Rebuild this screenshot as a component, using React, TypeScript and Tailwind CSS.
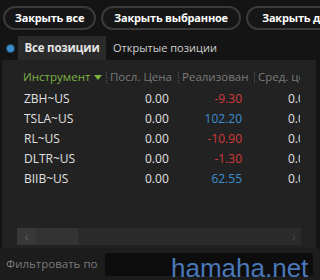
import React from 'react'

const rows = [
  { sym: 'ZBH~US', last: '0.00', real: '-9.30', avg: '0.00' },
  { sym: 'TSLA~US', last: '0.00', real: '102.20', avg: '0.00' },
  { sym: 'RL~US', last: '0.00', real: '-10.90', avg: '0.00' },
  { sym: 'DLTR~US', last: '0.00', real: '-1.30', avg: '0.00' },
  { sym: 'BIIB~US', last: '0.00', real: '62.55', avg: '0.00' },
]

function Sep() {
  return (
    <span className="flex w-[5px] shrink-0 justify-center">
      <span className="block h-[11px] border-l border-dotted border-[#555]" />
    </span>
  )
}

export default function App() {
  return (
    <div
      className="relative flex h-[280px] w-[320px] flex-col overflow-hidden bg-[#141414] text-[12px]"
      style={{ fontFamily: '"Open Sans", "Noto Sans", sans-serif' }}
    >
      {/* top buttons */}
      <div className="flex h-[36px] shrink-0 gap-[5px] whitespace-nowrap pl-[3px] pt-[6px]">
        <button className="h-[24px] w-[93px] shrink-0 rounded-full border-2 border-[#3a3a3a] bg-[#161616] text-[11px] font-bold tracking-[-0.2px] text-white">
          Закрыть все
        </button>
        <button className="h-[24px] w-[140px] shrink-0 rounded-full border-2 border-[#3a3a3a] bg-[#161616] text-[11px] font-bold tracking-[-0.2px] text-white">
          Закрыть выбранное
        </button>
        <button className="h-[24px] shrink-0 rounded-full border-2 border-[#3a3a3a] bg-[#161616] px-[14px] text-[11px] font-bold tracking-[-0.2px] text-white">
          Закрыть для
        </button>
      </div>

      {/* tabs */}
      <div className="flex h-[24px] shrink-0 items-stretch">
        <div className="flex w-[18px] items-center justify-center">
          <span className="ml-[2px] block h-[7px] w-[7px] rounded-full bg-[#3b8fd0] ring-1 ring-[#1d4a6b]" />
        </div>
        <div className="flex w-[88px] items-center justify-center bg-[#2a2a2a] text-[11.5px] font-bold tracking-[-0.2px] text-[#e6e6e6]">
          Все позиции
        </div>
        <div className="flex items-center pl-[7px] text-[11px] text-[#d0d0d0]">Открытые позиции</div>
      </div>

      {/* panel */}
      <div className="ml-[2px] mr-[4px] flex h-[188px] shrink-0 flex-col bg-[#222222]">
        <div className="mt-[9px] flex h-[16px] items-center whitespace-nowrap pl-[21px] text-[11.5px] text-[#7a7a7a]">
          <span className="flex w-[81px] shrink-0 items-center text-[#7cb342]">
            Инструмент
            <svg width="8" height="5" viewBox="0 0 8 5" className="ml-[4px]">
              <path d="M0 0h8L4 5z" fill="#7cb342" />
            </svg>
          </span>
          <Sep />
          <span className="w-[67px] shrink-0 pl-[1px]">Посл. Цена</span>
          <Sep />
          <span className="w-[71px] shrink-0 pl-[1px]">Реализован</span>
          <Sep />
          <span className="w-[43px] shrink-0 overflow-hidden pl-[1px]">Сред. цена</span>
        </div>
        <div className="mt-[4px] flex flex-col">
          {rows.map((r) => (
            <div key={r.sym} className="flex h-[20px] items-center whitespace-nowrap text-[12px] text-[#e0e0e0]">
              <span className="w-[143px] shrink-0 pl-[22px]">{r.sym}</span>
              <span className="w-[22px] shrink-0">{r.last}</span>
              <span
                className={
                  'w-[75px] shrink-0 text-right ' +
                  (r.real.startsWith('-') ? 'text-[#d23a3a]' : 'text-[#3a8fd0]')
                }
              >
                {r.real}
              </span>
              <span className="ml-[46px] w-[12px] shrink-0 overflow-hidden">{r.avg}</span>
            </div>
          ))}
        </div>

        {/* horizontal scrollbar */}
        <div className="mx-[15px] mt-auto mb-[3px] flex h-[17px] bg-[#2b2b2b]">
          <div className="flex w-[19px] items-center justify-center bg-[#383838] text-[13px] leading-none text-[#606060]">‹</div>
          <div className="w-[42px] bg-[#333333]" />
          <div className="flex-1" />
          <div className="flex w-[14px] items-center justify-center text-[13px] leading-none text-[#4a4a4a]">›</div>
        </div>
      </div>

      {/* filter row */}
      <div className="flex h-[32px] shrink-0 items-center bg-[#1c1c1c] pl-[6px] pr-[7px]">
        <span className="w-[99px] whitespace-nowrap text-[11.5px] text-[#7a7a7a]">Фильтровать по</span>
        <div className="h-[23px] flex-1 rounded-[3px] bg-[#0d0d0d]" />
      </div>

      <div
        className="absolute left-[171px] top-[255px] text-[26px] leading-none text-[#4a78b8]"
        style={{ fontFamily: '"Liberation Sans", Arial, sans-serif' }}
      >
        hamaha.net
      </div>
    </div>
  )
}
